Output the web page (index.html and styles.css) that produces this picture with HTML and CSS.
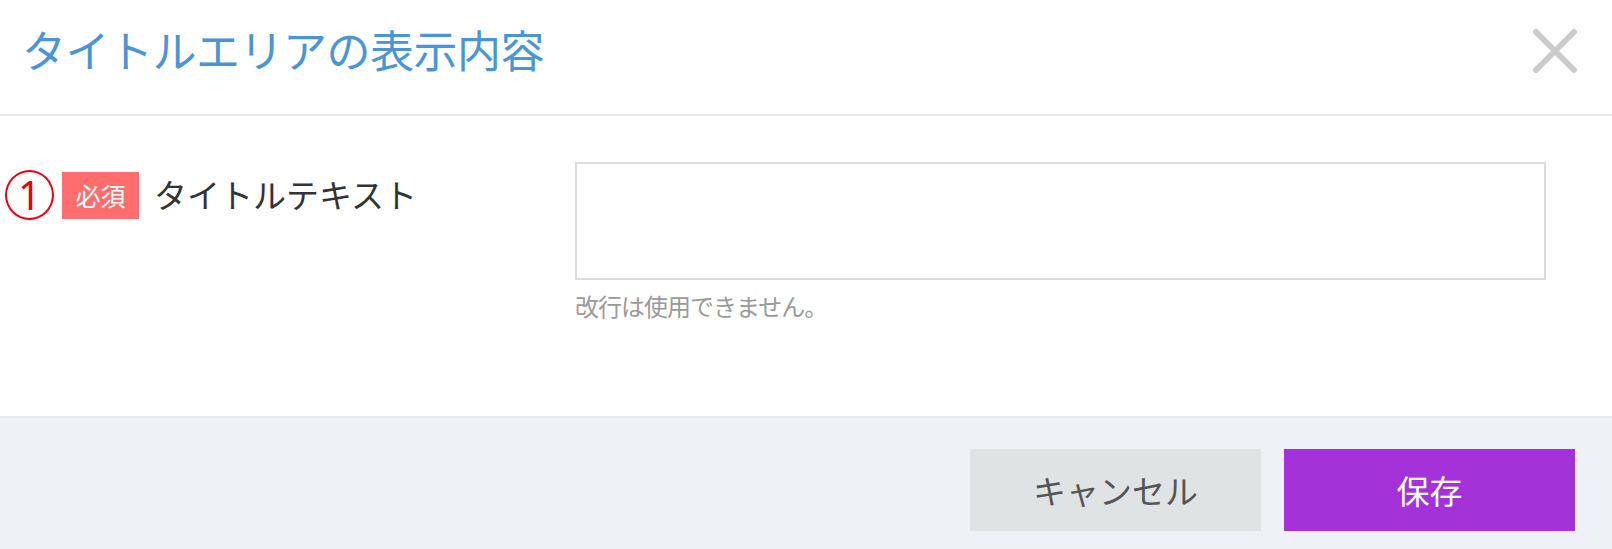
FILE: index.html
```html
<!DOCTYPE html>
<html lang="ja">
<head>
  <meta charset="UTF-8">
  <title>タイトルエリアの表示内容</title>
  <link rel="stylesheet" href="styles.css">
</head>
<body>
<div class="dialog">
  <div class="dialog-head">
    <h2 class="dialog-title">タイトルエリアの表示内容</h2>
    <span class="close">
      <svg width="46" height="46" viewBox="0 0 46 46">
        <path d="M4 4 L42 42 M42 4 L4 42" stroke="#cbcbcb" stroke-width="6" stroke-linecap="round" fill="none"/>
      </svg>
    </span>
  </div>
  <div class="dialog-body">
    <div class="form-row">
      <div class="label-col">
        <span class="num">1</span>
        <span class="required">必須</span>
        <span class="label">タイトルテキスト</span>
      </div>
      <div class="field-col">
        <textarea class="field"></textarea>
        <p class="hint">改行は使用できません。</p>
      </div>
    </div>
  </div>
  <div class="dialog-foot">
    <button class="btn btn-cancel">キャンセル</button>
    <button class="btn btn-save">保存</button>
  </div>
</div>
</body>
</html>
```

FILE: styles.css
```css
* {
  padding: 0;
  margin: 0;
  box-sizing: border-box;
}

body {
  background: #fff;
  font-family: "Noto Sans CJK JP", "Noto Sans", sans-serif;
  color: #333;
}

.dialog {
  width: 1612px;
  height: 549px;
  display: flex;
  flex-direction: column;
}

.dialog-head {
  height: 116px;
  border-bottom: 2px solid #e8e8e8;
  display: flex;
  align-items: center;
  justify-content: space-between;
  padding: 0 34px 12px 22px;
}

.dialog-title {
  font-size: 44px;
  font-weight: 400;
  line-height: 1.2;
  color: #4b95d5;
  letter-spacing: -0.5px;
  margin-top: -4px;
}

.close {
  display: block;
  width: 46px;
  height: 46px;
  cursor: pointer;
}

.dialog-body {
  flex: 1;
}

.form-row {
  display: flex;
  padding-top: 46px;
}

.label-col {
  width: 575px;
  display: flex;
  align-items: center;
  height: 50px;
  margin-top: 8px;
  padding-left: 5px;
}

.num {
  width: 49px;
  height: 50px;
  border: 2px solid #e60012;
  border-radius: 50%;
  color: #e60012;
  font-family: "Noto Sans", "DejaVu Sans", sans-serif;
  font-weight: 400;
  font-size: 40px;
  line-height: 45px;
  text-align: center;
}

.required {
  margin-left: 8px;
  width: 77px;
  height: 47px;
  background: #ff6d6d;
  color: #fff;
  font-size: 25px;
  line-height: 47px;
  text-align: center;
}

.label {
  margin-left: 15px;
  font-size: 33px;
  line-height: 1.2;
  color: #333;
}

.field-col {
  width: 971px;
}

.field {
  display: block;
  width: 971px;
  height: 118px;
  border: 2px solid #dcdcdc;
  resize: none;
  outline: none;
}

.hint {
  margin-top: 12px;
  font-size: 24px;
  line-height: 1.2;
  color: #9a9a9a;
  letter-spacing: -1px;
}

.dialog-foot {
  height: 133px;
  background: #eef1f5;
  border-top: 2px solid #e3e8ee;
  display: flex;
  justify-content: flex-end;
  gap: 23px;
  padding: 31px 37px 0 0;
}

.btn {
  width: 291px;
  height: 82px;
  border: 0;
  font-family: "Noto Sans CJK JP", "Noto Sans", sans-serif;
  font-size: 33px;
  cursor: pointer;
}

.btn-cancel {
  background: #e0e3e4;
  color: #555;
}

.btn-save {
  background: #a332d8;
  color: #fff;
}
```
